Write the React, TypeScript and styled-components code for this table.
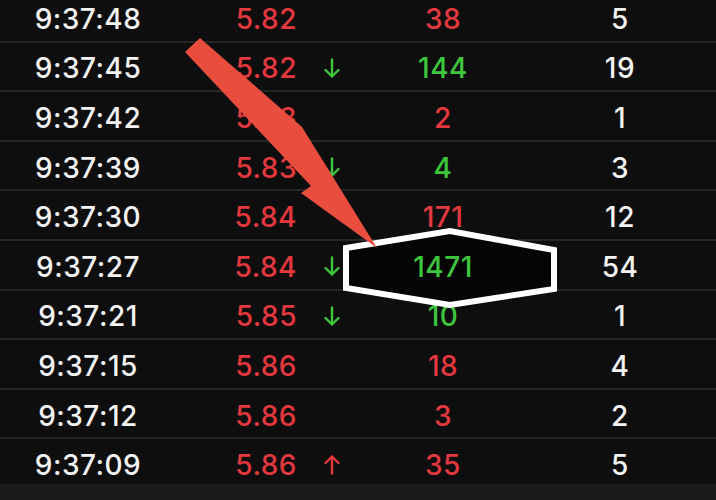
import React from "react";
import styled, { createGlobalStyle } from "styled-components";

const GlobalStyle = createGlobalStyle`
  html, body {
    margin: 0;
    padding: 0;
    background: #1b1b1e;
  }
`;

type Tone = "red" | "green" | "white";
type Dir = "up" | "down" | null;

interface ITick {
  time: string;
  price: string;
  dir: Dir;
  volume: string;
  tone: Tone;
  count: string;
}

const ticks: ITick[] = [
  { time: "9:37:48", price: "5.82", dir: null, volume: "38", tone: "red", count: "5" },
  { time: "9:37:45", price: "5.82", dir: "down", volume: "144", tone: "green", count: "19" },
  { time: "9:37:42", price: "5.83", dir: null, volume: "2", tone: "red", count: "1" },
  { time: "9:37:39", price: "5.83", dir: "down", volume: "4", tone: "green", count: "3" },
  { time: "9:37:30", price: "5.84", dir: null, volume: "171", tone: "red", count: "12" },
  { time: "9:37:27", price: "5.84", dir: "down", volume: "1471", tone: "green", count: "54" },
  { time: "9:37:21", price: "5.85", dir: "down", volume: "10", tone: "green", count: "1" },
  { time: "9:37:15", price: "5.86", dir: null, volume: "18", tone: "red", count: "4" },
  { time: "9:37:12", price: "5.86", dir: null, volume: "3", tone: "red", count: "2" },
  { time: "9:37:09", price: "5.86", dir: "up", volume: "35", tone: "red", count: "5" },
];

const colors: Record<Tone, string> = {
  red: "#e3383e",
  green: "#3ec63d",
  white: "#f3f3f3",
};

const Page = styled.div`
  position: relative;
  width: 716px;
  height: 500px;
  overflow: hidden;
  background: #1b1b1e;
  font-family: Inter, "Liberation Sans", sans-serif;
`;

const List = styled.div`
  margin-top: -7px;
  display: flex;
  flex-direction: column;
`;

const Row = styled.div<{ $last?: boolean }>`
  display: grid;
  grid-template-columns: 176px 126px 60px 162px 1fr;
  align-items: center;
  box-sizing: border-box;
  height: ${(p) => (p.$last ? "45px" : "49.6px")};
  padding-top: ${(p) => (p.$last ? "6px" : "4px")};
  background: #0e0e0e;
  border-bottom: ${(p) => (p.$last ? "none" : "2px solid #262627")};
`;

const Cell = styled.span<{ $tone: Tone; $align?: "center" | "right" }>`
  position: relative;
  z-index: 2;
  color: ${(p) => colors[p.$tone]};
  font-size: 28px;
  font-weight: 500;
  letter-spacing: 0.5px;
  line-height: 1;
  text-align: ${(p) => p.$align || "center"};
  padding-right: ${(p) => (p.$align === "right" ? "5px" : "0")};
`;

const DirCell = styled.span`
  display: flex;
  justify-content: center;
  align-items: center;
`;

const Overlay = styled.svg<{ $z: number }>`
  position: absolute;
  left: 0;
  top: 0;
  z-index: ${(p) => p.$z};
  pointer-events: none;
`;

const TickArrow = ({ dir }: { dir: Dir }) => {
  if (!dir) return null;
  const color = dir === "down" ? colors.green : colors.red;
  return (
    <svg width="18" height="21" viewBox="0 0 18 21">
      {dir === "down" ? (
        <path d="M9 1.5V18.5M2.5 12L9 18.5L15.5 12" fill="none" stroke={color} strokeWidth="2.4" strokeLinecap="round" strokeLinejoin="round" />
      ) : (
        <path d="M9 19.5V2.5M2.5 9L9 2.5L15.5 9" fill="none" stroke={color} strokeWidth="2.4" strokeLinecap="round" strokeLinejoin="round" />
      )}
    </svg>
  );
};

const hexagon = "346,248 450,231 554,250 554,289 450,305 346,288";

const App = () => {
  return (
    <Page>
      <GlobalStyle />
      <List>
        {ticks.map((t, i) => (
          <Row key={t.time} $last={i === ticks.length - 1}>
            <Cell $tone="white">{t.time}</Cell>
            <Cell $tone="red" $align="right">{t.price}</Cell>
            <DirCell>
              <TickArrow dir={t.dir} />
            </DirCell>
            <Cell $tone={t.tone}>{t.volume}</Cell>
            <Cell $tone="white">{t.count}</Cell>
          </Row>
        ))}
      </List>

      {/* highlight fill sits under the text */}
      <Overlay $z={1} width="716" height="500" viewBox="0 0 716 500">
        <polygon points={hexagon} fill="#050505" />
      </Overlay>

      {/* markup annotation on top */}
      <Overlay $z={3} width="716" height="500" viewBox="0 0 716 500">
        <polygon points={hexagon} fill="none" stroke="#ffffff" strokeWidth="6" strokeLinejoin="miter" />
        <polygon points="185,52 200,38 302,127 377,248 301,193 311,186" fill="#e84d3e" />
      </Overlay>
    </Page>
  );
};

export default App;
